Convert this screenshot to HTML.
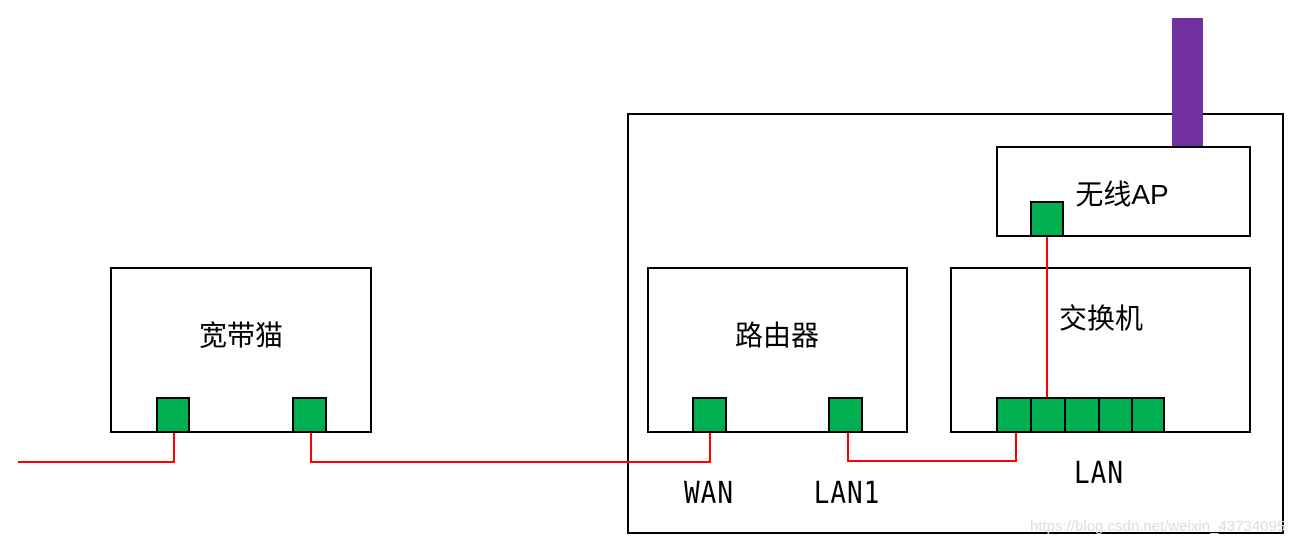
<!DOCTYPE html><html><head><style>
body{margin:0;width:1302px;height:548px;background:#fff;position:relative;overflow:hidden;font-family:"Liberation Sans","Noto Sans CJK SC",sans-serif}
.b{position:absolute;border:2px solid #000;box-sizing:border-box;background:#fff}
.p{position:absolute;background:#00b050;border:2px solid #000;box-sizing:border-box}
.r{position:absolute;background:#f00}
.t{position:absolute;font-size:28px;transform:translate(-50%,-50%);white-space:nowrap}
.m{position:absolute;font-family:"DejaVu Sans Mono","Liberation Mono",monospace;font-size:26px;transform:translate(-50%,-50%) scaleY(1.15);letter-spacing:1px}
</style></head><body>
<div class="b" style="left:627px;top:113px;width:657px;height:421px"></div>
<div style="position:absolute;left:1172px;top:18px;width:31px;height:130px;background:#7030a0"></div>
<div class="b" style="left:110px;top:267px;width:262px;height:166px"></div>
<div class="b" style="left:647px;top:267px;width:261px;height:166px"></div>
<div class="b" style="left:950px;top:267px;width:301px;height:166px"></div>
<div class="b" style="left:996px;top:146px;width:255px;height:91px"></div>
<div class="r" style="left:18px;top:461px;width:157px;height:2px"></div>
<div class="r" style="left:173px;top:432px;width:2px;height:31px"></div>
<div class="r" style="left:310px;top:432px;width:2px;height:31px"></div>
<div class="r" style="left:310px;top:461px;width:401px;height:2px"></div>
<div class="r" style="left:709px;top:432px;width:2px;height:31px"></div>
<div class="r" style="left:847px;top:432px;width:2px;height:30px"></div>
<div class="r" style="left:847px;top:460px;width:170px;height:2px"></div>
<div class="r" style="left:1015px;top:432px;width:2px;height:30px"></div>
<div class="r" style="left:1046px;top:236px;width:2px;height:162px"></div>
<div class="p" style="left:156px;top:397px;width:34px;height:36px"></div>
<div class="p" style="left:292px;top:397px;width:35px;height:36px"></div>
<div class="p" style="left:692px;top:397px;width:35px;height:36px"></div>
<div class="p" style="left:828px;top:397px;width:35px;height:36px"></div>
<div class="p" style="left:996px;top:397px;width:36px;height:36px"></div>
<div class="p" style="left:1030px;top:397px;width:36px;height:36px"></div>
<div class="p" style="left:1064px;top:397px;width:36px;height:36px"></div>
<div class="p" style="left:1098px;top:397px;width:35px;height:36px"></div>
<div class="p" style="left:1131px;top:397px;width:34px;height:36px"></div>
<div class="p" style="left:1030px;top:201px;width:34px;height:36px"></div>
<div class="t" style="left:241px;top:334px">宽带猫</div>
<div class="t" style="left:777px;top:334px">路由器</div>
<div class="t" style="left:1101px;top:317px">交换机</div>
<div class="t" style="left:1122px;top:193px">无线AP</div>
<div class="m" style="left:709px;top:494px">WAN</div>
<div class="m" style="left:847px;top:494px">LAN1</div>
<div class="m" style="left:1099px;top:474px">LAN</div>
<div style="position:absolute;left:1030px;top:518px;font-size:15px;color:#ddd">https://blog.csdn.net/weixin_43734095</div>
</body></html>
